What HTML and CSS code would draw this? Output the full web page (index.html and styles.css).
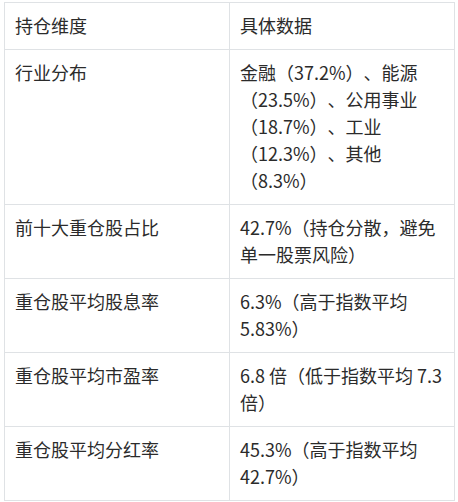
FILE: index.html
```html
<!DOCTYPE html>
<html lang="zh-CN">
<head>
<meta charset="utf-8">
<link rel="stylesheet" href="styles.css">
</head>
<body>
<table class="data-table">
  <thead>
    <tr><th>持仓维度</th><th>具体数据</th></tr>
  </thead>
  <tbody>
    <tr><td>行业分布</td><td>金融（37.2%）、能源（23.5%）、公用事业（18.7%）、工业（12.3%）、其他（8.3%）</td></tr>
    <tr><td>前十大重仓股占比</td><td>42.7%（持仓分散，避免单一股票风险）</td></tr>
    <tr><td>重仓股平均股息率</td><td>6.3%（高于指数平均 5.83%）</td></tr>
    <tr><td>重仓股平均市盈率</td><td>6.8 倍（低于指数平均 7.3 倍）</td></tr>
    <tr><td>重仓股平均分红率</td><td>45.3%（高于指数平均 42.7%）</td></tr>
  </tbody>
</table>
</body>
</html>
```
FILE: styles.css
```css
html, body {
  margin: 0;
  padding: 0;
  background: #ffffff;
}
body {
  padding: 2px 0 0 4px;
  font-family: "Noto Sans CJK SC", "Noto Sans", sans-serif;
  font-size: 18px;
  line-height: 27px;
  color: #2b2b2b;
  text-spacing-trim: space-all;
  font-feature-settings: "halt" 0, "chws" 0;
}
.data-table {
  width: 451px;
  border-collapse: collapse;
  table-layout: fixed;
}
.data-table th,
.data-table td {
  width: 50%;
  border: 1px solid #dfe2e5;
  padding: 9px 10px 10px 10px;
  text-align: left;
  vertical-align: top;
  font-weight: normal;
}
```
